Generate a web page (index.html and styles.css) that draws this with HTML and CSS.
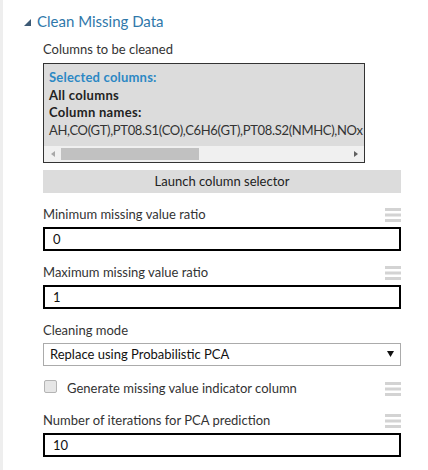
FILE: index.html
```html
<!DOCTYPE html>
<html>
<head>
<meta charset="utf-8">
<link rel="stylesheet" href="styles.css">
</head>
<body>
<div class="panel">
  <div class="header">
    <svg class="caret" width="7" height="7" viewBox="0 0 7 7"><polygon points="7,0 7,7 0,7" fill="#3d5a75"/></svg>
    <span class="title">Clean Missing Data</span>
  </div>
  <div class="body">
    <div class="label cols-label">Columns to be cleaned</div>
    <div class="colbox">
      <div class="coltext">
        <div class="line sel">Selected columns:</div>
        <div class="line strong">All columns</div>
        <div class="line strong">Column names:</div>
        <div class="line names">AH,CO(GT),PT08.S1(CO),C6H6(GT),PT08.S2(NMHC),NOx</div>
      </div>
      <div class="hscroll">
        <span class="sbtn"><span class="arrow-left"></span></span>
        <span class="thumb"></span>
        <span class="track"></span>
        <span class="sbtn"><span class="arrow-right"></span></span>
      </div>
    </div>
    <div class="launch">Launch column selector</div>

    <div class="field">
      <div class="field-head"><span class="label">Minimum missing value ratio</span><svg class="ham" width="16" height="14" viewBox="0 0 16 14"><rect x="0" y="0" width="16" height="3"/><rect x="0" y="5.5" width="16" height="3"/><rect x="0" y="11" width="16" height="3"/></svg></div>
      <div class="input">0</div>
    </div>

    <div class="field">
      <div class="field-head"><span class="label">Maximum missing value ratio</span><svg class="ham" width="16" height="14" viewBox="0 0 16 14"><rect x="0" y="0" width="16" height="3"/><rect x="0" y="5.5" width="16" height="3"/><rect x="0" y="11" width="16" height="3"/></svg></div>
      <div class="input">1</div>
    </div>

    <div class="field">
      <div class="field-head"><span class="label">Cleaning mode</span></div>
      <div class="select"><span>Replace using Probabilistic PCA</span><svg width="7" height="6" viewBox="0 0 7 6"><polygon points="0,0 7,0 3.5,6" fill="#111"/></svg></div>
    </div>

    <div class="check-row">
      <span class="checkbox"></span>
      <span class="check-label">Generate missing value indicator column</span>
      <svg class="ham" width="16" height="14" viewBox="0 0 16 14"><rect x="0" y="0" width="16" height="3"/><rect x="0" y="5.5" width="16" height="3"/><rect x="0" y="11" width="16" height="3"/></svg>
    </div>

    <div class="field field-last">
      <div class="field-head"><span class="label">Number of iterations for PCA prediction</span><svg class="ham" width="16" height="14" viewBox="0 0 16 14"><rect x="0" y="0" width="16" height="3"/><rect x="0" y="5.5" width="16" height="3"/><rect x="0" y="11" width="16" height="3"/></svg></div>
      <div class="input">10</div>
    </div>
  </div>
</div>
</body>
</html>
```
FILE: styles.css
```css
html, body {
  margin: 0;
  padding: 0;
  background: #ffffff;
}
body {
  font-family: Lato, "Liberation Sans", sans-serif;
  font-size: 13px;
  color: #333333;
}
.panel {
  border-left: 3px solid #eeeeee;
  min-height: 470px;
  box-sizing: border-box;
}
.header {
  display: flex;
  align-items: center;
  padding: 11px 0 0 21px;
  height: 20px;
}
.caret {
  margin-top: 3px;
  margin-right: 6px;
  flex: none;
}
.title {
  font-size: 15px;
  line-height: 20px;
  color: #2f78aa;
}
.body {
  padding-left: 40px;
  width: 358px;
}
.label {
  line-height: 18px;
  color: #333333;
}
.cols-label {
  margin-top: 9px;
}
.colbox {
  margin-top: 5px;
  width: 322px;
  box-sizing: border-box;
  border: 1px solid #333333;
  background: #dcdcdc;
}
.coltext {
  overflow: hidden;
  white-space: nowrap;
  padding: 5px 0 6px 5px;
}
.line {
  line-height: 17.7px;
}
.sel {
  font-weight: bold;
  color: #2c88c4;
  letter-spacing: 0.2px;
}
.strong {
  font-weight: bold;
  color: #222222;
  letter-spacing: 0.3px;
}
.names {
  color: #333333;
  letter-spacing: -0.32px;
}
.hscroll {
  display: flex;
  align-items: center;
  height: 16px;
  background: #f0f0f0;
}
.sbtn {
  width: 17px;
  height: 16px;
  display: flex;
  align-items: center;
  justify-content: center;
  flex: none;
}
.arrow-left {
  width: 0;
  height: 0;
  border-top: 3.5px solid transparent;
  border-bottom: 3.5px solid transparent;
  border-right: 4px solid #a8a8a8;
}
.arrow-right {
  width: 0;
  height: 0;
  border-top: 3.5px solid transparent;
  border-bottom: 3.5px solid transparent;
  border-left: 4px solid #606060;
}
.thumb {
  width: 138px;
  height: 12px;
  background: #c1c1c1;
  flex: none;
}
.track {
  flex: 1;
}
.launch {
  margin-top: 7px;
  height: 23px;
  line-height: 23px;
  text-align: center;
  background: #dcdcdc;
  color: #222222;
}
.field {
  margin-top: 12px;
}
.field-head {
  display: flex;
  justify-content: space-between;
  align-items: center;
  height: 18px;
  margin-bottom: 4px;
}
.ham {
  fill: #d3d3d3;
  margin-top: 2px;
  flex: none;
}
.input {
  height: 24px;
  box-sizing: border-box;
  border: 2px solid #000000;
  padding-left: 8px;
  line-height: 20px;
  color: #111111;
}
.select {
  height: 23px;
  box-sizing: border-box;
  border: 1px solid #ababab;
  padding: 0 6px;
  display: flex;
  align-items: center;
  justify-content: space-between;
  color: #111111;
}
.check-row {
  margin-top: 13px;
  display: flex;
  align-items: center;
  height: 18px;
}
.checkbox {
  width: 13px;
  height: 13px;
  box-sizing: border-box;
  margin-left: 1px;
  margin-top: -2px;
  border: 1px solid #b4b4b4;
  border-radius: 2px;
  background: #e6e6e6;
  flex: none;
}
.check-label {
  margin-left: 10px;
  flex: 1;
  line-height: 18px;
  color: #333333;
}
.field-last {
  margin-top: 14px;
}
```
